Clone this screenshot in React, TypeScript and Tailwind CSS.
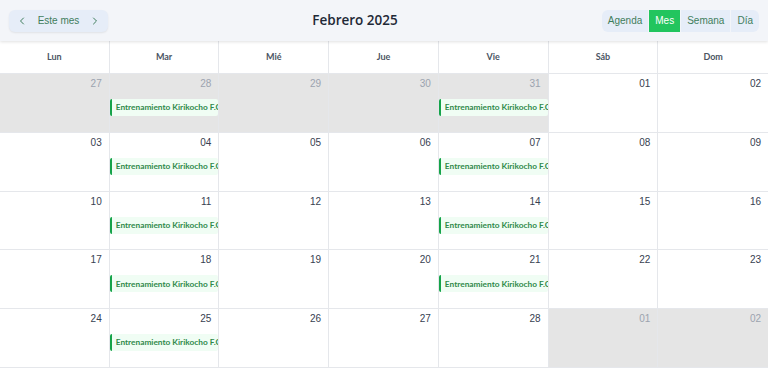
import { ChevronLeft, ChevronRight } from "lucide-react";

type Day = { n: string; off?: boolean; event?: boolean };

const weekDays = ["Lun", "Mar", "Mié", "Jue", "Vie", "Sáb", "Dom"];

const weeks: Day[][] = [
  [
    { n: "27", off: true },
    { n: "28", off: true, event: true },
    { n: "29", off: true },
    { n: "30", off: true },
    { n: "31", off: true, event: true },
    { n: "01" },
    { n: "02" },
  ],
  [{ n: "03" }, { n: "04", event: true }, { n: "05" }, { n: "06" }, { n: "07", event: true }, { n: "08" }, { n: "09" }],
  [{ n: "10" }, { n: "11", event: true }, { n: "12" }, { n: "13" }, { n: "14", event: true }, { n: "15" }, { n: "16" }],
  [{ n: "17" }, { n: "18", event: true }, { n: "19" }, { n: "20" }, { n: "21", event: true }, { n: "22" }, { n: "23" }],
  [
    { n: "24" },
    { n: "25", event: true },
    { n: "26" },
    { n: "27" },
    { n: "28" },
    { n: "01", off: true },
    { n: "02", off: true },
  ],
];

const views = ["Agenda", "Mes", "Semana", "Día"];

const App = () => {
  return (
    <div className="w-[768px] h-[370px] bg-white overflow-hidden font-['Liberation_Sans',Arial,sans-serif]">
      <header className="relative z-10 h-[41px] bg-[#f3f5f9] shadow-[0_1px_3px_rgba(0,0,0,0.12)] flex items-center justify-between px-[9px]">
        <div className="w-[99px] h-[22px] rounded-md bg-[#e6edf8] shadow-[0_1px_2px_rgba(0,0,0,0.08)] flex items-center justify-between px-[7px] text-[#3f7d5c]">
          <ChevronLeft size={12} strokeWidth={2} />
          <span className="text-[10px]">Este mes</span>
          <ChevronRight size={12} strokeWidth={2} />
        </div>
        <h1 className="absolute left-1/2 -translate-x-1/2 ml-[-29px] font-['Open_Sans',sans-serif] text-[13.5px] font-semibold text-[#1f2937]">
          Febrero 2025
        </h1>
        <div className="flex gap-[1px] rounded-md overflow-hidden">
          {views.map(v => (
            <button
              key={v}
              className={
                v === "Mes"
                  ? "h-[22px] px-[6px] text-[10px] bg-[#22c55e] text-white"
                  : "h-[22px] px-[6px] text-[10px] bg-[#e6edf8] text-[#3f7d5c]"
              }
            >
              {v}
            </button>
          ))}
        </div>
      </header>
      <div className="grid grid-cols-7 h-[33px] border-b border-[#e5e7eb]">
        {weekDays.map((d, i) => (
          <div
            key={d}
            className={`flex items-center justify-center font-['Lato',sans-serif] text-[9px] font-bold text-[#4b5563] ${i < 6 ? "border-r border-[#e5e7eb]" : ""}`}
          >
            {d}
          </div>
        ))}
      </div>
      {weeks.map((week, wi) => (
        <div key={wi} className="grid grid-cols-7 h-[58.8px] border-b border-[#e5e7eb]">
          {week.map((day, di) => (
            <div
              key={di}
              className={`flex flex-col min-w-0 ${di < 6 ? "border-r border-[#e5e7eb]" : ""} ${day.off ? "bg-[#e5e5e5]" : "bg-white"}`}
            >
              <div className={`text-right pr-[7px] pt-[3px] text-[10px] leading-[14px] ${day.off ? "text-[#9ca3af]" : "text-[#374151]"}`}>
                {day.n}
              </div>
              {day.event && (
                <div className="mt-[8px] h-[17px] border-l-2 border-[#16a34a] bg-[#f0fdf4] rounded-[2px] pl-[4px] overflow-hidden whitespace-nowrap flex items-center font-['Lato',sans-serif] text-[8.3px] font-bold text-[#2f8a4a]">
                  Entrenamiento Kirikocho F.C
                </div>
              )}
            </div>
          ))}
        </div>
      ))}
    </div>
  );
};

export default App;
